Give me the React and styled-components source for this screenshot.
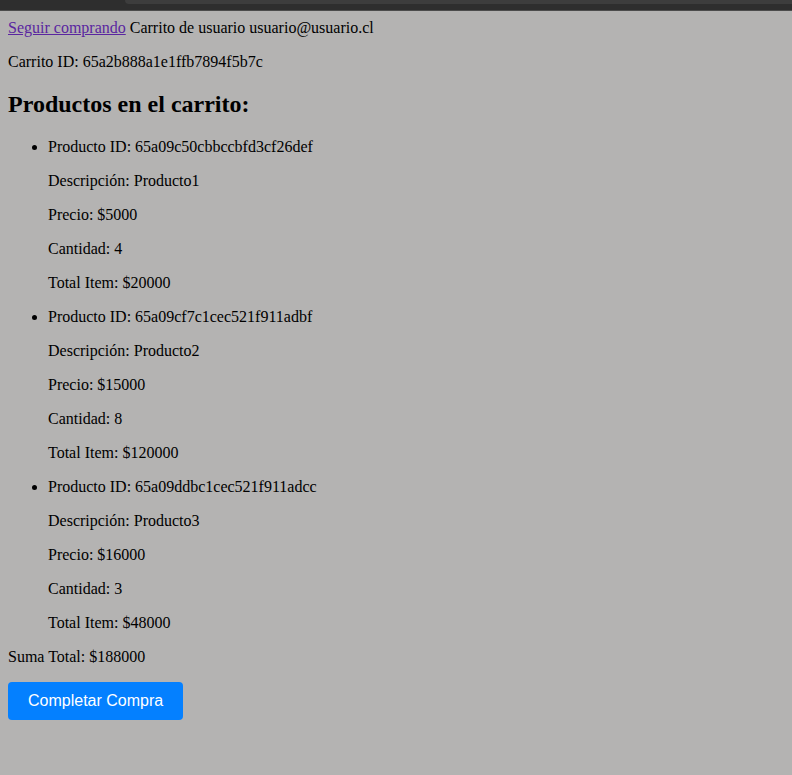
import React from 'react';
import styled, { createGlobalStyle } from 'styled-components';

const GlobalStyle = createGlobalStyle`
	html, body {
		margin: 0;
		background: #b4b3b2;
		font-family: "Liberation Serif", "Times New Roman", serif;
		font-size: 16px;
		color: #000;
	}
`

const Chrome = styled.div`
	height: 10px;
	display: flex;
	background: #2e2e2e;
	border-bottom: 1px solid #4c4c4c;
`

const ChromeGap = styled.div`
	width: 125px;
`

const ChromeStrip = styled.div`
	flex: 1;
	height: 4px;
	background: #3d3d3d;
	border-bottom-left-radius: 6px;
`

const Page = styled.div`
	padding: 8px;
`

const Header = styled.div``

const BackLink = styled.a`
	color: #5a26a0;
	text-decoration: underline;
`

const Text = styled.p`
	margin: 16px 0;
`

const Title = styled.h2`
	font-size: 24px;
	font-weight: bold;
	margin: 20px 0;
`

const List = styled.ul`
	margin: 16px 0;
	padding-left: 40px;
	list-style: disc;
`

const BuyButton = styled.button`
	background: #0480ff;
	color: #fff;
	border: none;
	border-radius: 4px;
	padding: 10px 20px;
	font-family: "Liberation Sans", Arial, sans-serif;
	font-size: 16px;
	line-height: 18px;
	cursor: pointer;
`

const items = [
	{ id: '65a09c50cbbccbfd3cf26def', desc: 'Producto1', price: 5000, qty: 4 },
	{ id: '65a09cf7c1cec521f911adbf', desc: 'Producto2', price: 15000, qty: 8 },
	{ id: '65a09ddbc1cec521f911adcc', desc: 'Producto3', price: 16000, qty: 3 },
]

export default function App() {
	const total = items.reduce((s, it) => s + it.price * it.qty, 0)

	return (
		<>
			<GlobalStyle />
			<Chrome>
				<ChromeGap />
				<ChromeStrip />
			</Chrome>
			<Page>
				<Header>
					<BackLink href="#">Seguir comprando</BackLink> Carrito de usuario usuario@usuario.cl
				</Header>
				<Text>Carrito ID: 65a2b888a1e1ffb7894f5b7c</Text>
				<Title>Productos en el carrito:</Title>
				<List>
					{items.map((it) => (
						<li key={it.id}>
							<Text>Producto ID: {it.id}</Text>
							<Text>Descripción: {it.desc}</Text>
							<Text>Precio: ${it.price}</Text>
							<Text>Cantidad: {it.qty}</Text>
							<Text>Total Item: ${it.price * it.qty}</Text>
						</li>
					))}
				</List>
				<Text>Suma Total: ${total}</Text>
				<BuyButton>Completar Compra</BuyButton>
			</Page>
		</>
	)
}
